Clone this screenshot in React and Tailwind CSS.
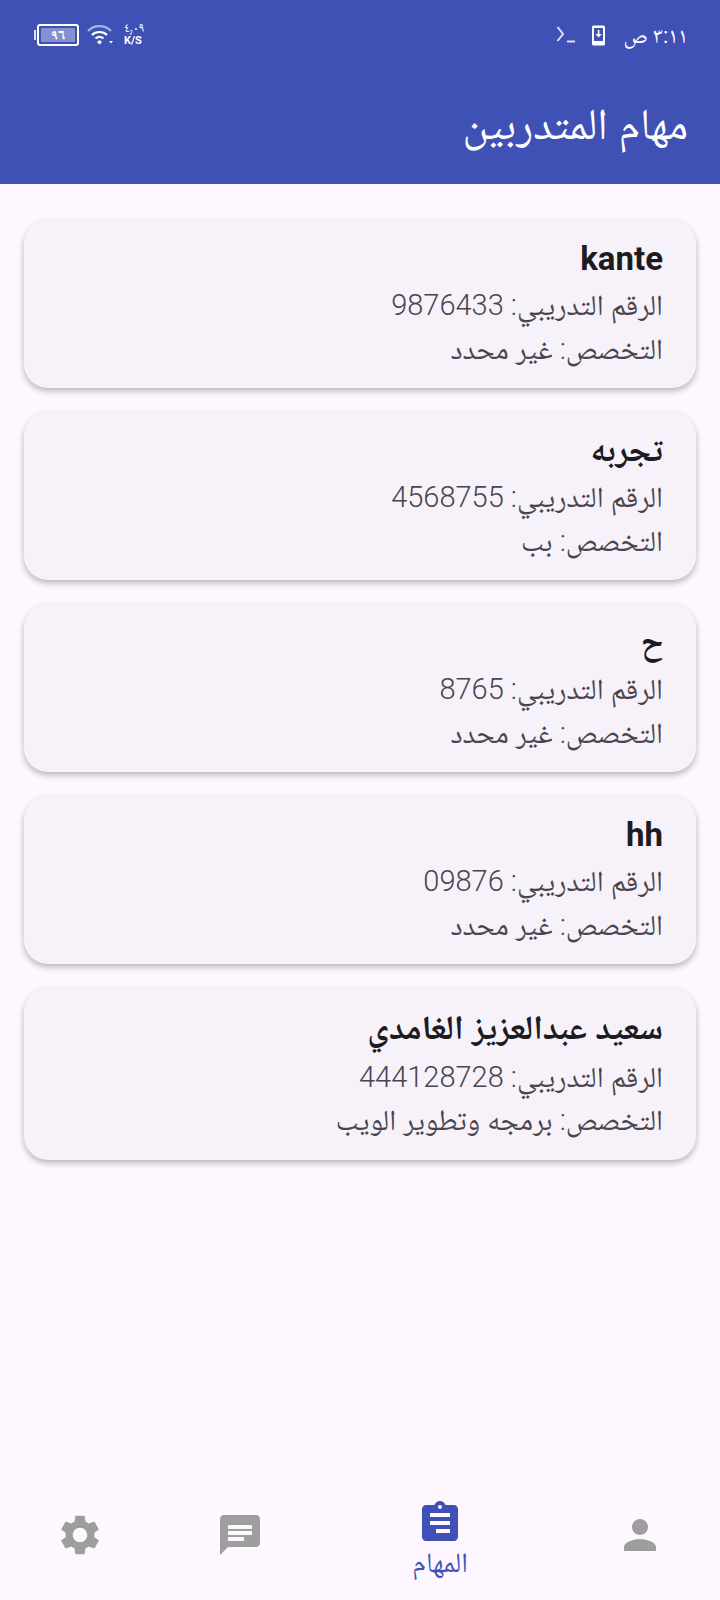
const font = { fontFamily: '"Roboto","Noto Naskh Arabic","Noto Sans Arabic","Droid Arabic Naskh",serif' };

const trainees = [
  { name: "kante", num: "9876433", spec: "غير محدد" },
  { name: "تجربه", num: "4568755", spec: "بب", ar: true },
  { name: "ح", num: "8765", spec: "غير محدد", ar: true },
  { name: "hh", num: "09876", spec: "غير محدد" },
  { name: "سعيد عبدالعزيز الغامدي", num: "444128728", spec: "برمجه وتطوير الويب", ar: true, tall: true },
];

function Card({ t }) {
  const box = t.tall ? "h-[172px] pt-[19px]" : t.ar ? "h-[168px] pt-[17px]" : "h-[168px] pt-[19px]";
  const nameGap = t.tall ? "mb-[10px]" : t.ar ? "mb-[8px]" : "mb-[6px]";
  const numGap = t.tall ? "mb-[3px]" : "mb-[4px]";
  return (
    <div className={`${box} rounded-[24px] bg-[#f7f2fa] pl-8 pr-[33px] shadow-[0_3px_6px_rgba(0,0,0,0.28)] flex flex-col text-right`}>
      <div className={`${t.ar ? "text-[34px] tracking-[0.55px]" : "text-[33px]"} ${nameGap} leading-[40px] font-bold text-[#1c1b1f]`}>{t.name}</div>
      <div className={`${numGap} text-[29px] tracking-[0.4px] leading-[40px] font-light text-[#49454f]`}>الرقم التدريبي: {t.num}</div>
      <div className="text-[29px] leading-[40px] font-light text-[#49454f]">التخصص: {t.spec}</div>
    </div>
  );
}

export default function App() {
  return (
    <div dir="rtl" style={font} className="relative w-[720px] h-[1600px] bg-[#fef7ff] flex flex-col overflow-hidden">
      <header className="h-[184px] bg-[#3f51b5] text-white pr-[32px] pl-[34px] flex flex-col">
        <div className="h-[70px] flex items-center justify-between">
          <div className="flex items-center gap-[16px]">
            <span className="text-[22px] ml-[1px]">٣:١١ ص</span>
            <svg width="14" height="21" viewBox="0 0 14 21"><rect width="13" height="20" y="0.5" rx="1.5" fill="#fff" /><rect x="2" y="3" width="9" height="13" fill="#3f51b5" /><path d="M5.800 5h1.600v4h2.400L6.600 12.600 3.400 9h2.400z" fill="#fff" /></svg>
            <svg width="20" height="18" viewBox="0 0 20 18" fill="none"><path d="M1.500 1 L7 8 L1.500 15" stroke="#dfe2f3" strokeWidth="2" /><path d="M11 15.500h8" stroke="#dfe2f3" strokeWidth="2" /></svg>
          </div>
          <div dir="ltr" className="flex flex-row-reverse items-center gap-[8px] mr-auto">
            <div className="flex flex-col items-start leading-none -mt-[2px] ml-[3px]">
              <span className="text-[13px] leading-[14px] tracking-[1px]">٤٫٠٩</span>
              <span className="text-[11px] leading-[12px] font-bold">K/S</span>
            </div>
            <svg width="26" height="20" viewBox="0 0 26 20" fill="none"><path d="M1 6C7-.5 18-.5 24 6" stroke="#aab3de" strokeWidth="2.200" /><path d="M5 10C9 6 16 6 20 10" stroke="#fff" strokeWidth="2.200" /><path d="M8.500 13.500c2.500-2 5.500-2 8 0" stroke="#fff" strokeWidth="2.200" /><path d="M10 17l2.500-2 2.500 2-2.500 2.500z" fill="#fff" /><path d="M22 16h4l-2 2.500z" fill="#fff" /></svg>
            <div className="flex items-center gap-[1px]">
              <div className="w-[2px] h-[10px] bg-[#dfe2f3]"></div>
              <div className="w-[42px] h-[22px] rounded-[3px] border-2 border-white p-[2px] flex">
                <div className="flex-1 bg-[#8590d0] rounded-[1px] flex items-center justify-center text-[15px] leading-none font-bold">٩٦</div>
              </div>
            </div>
          </div>
        </div>
        <h1 className="text-[44px] leading-[48px] font-light mt-[30px]">مهام المتدربين</h1>
      </header>

      <main className="flex flex-col gap-[24px] px-[24px] pt-[36px]">
        {trainees.map((t) => <Card key={t.num} t={t} />)}
      </main>

      <nav className="absolute bottom-0 left-0 right-0 h-[116px] flex pt-[15px]">
        <div className="w-[160px] ml-[40px] flex justify-center pt-[12px]">
          <svg width="48" height="48" viewBox="0 0 24 24" fill="#9e9e9e"><path d="M12 12c2.210 0 4-1.790 4-4s-1.790-4-4-4-4 1.790-4 4 1.790 4 4 4zm0 2c-2.670 0-8 1.340-8 4v2h16v-2c0-2.660-5.330-4-8-4z" /></svg>
        </div>
        <div className="w-[160px] ml-[40px] flex flex-col items-center">
          <svg width="48" height="48" viewBox="0 0 24 24" fill="#3f51b5"><path d="M19 3h-4.180C14.400 1.840 13.300 1 12 1s-2.400.84-2.820 2H5c-1.100 0-2 .9-2 2v14c0 1.100.9 2 2 2h14c1.100 0 2-.9 2-2V5c0-1.100-.9-2-2-2zm-7 0c.55 0 1 .45 1 1s-.45 1-1 1-1-.45-1-1 .45-1 1-1zM7 7h10v2H7V7zm0 4h10v2H7v-2zm3 4h7v2h-7v-2z" /></svg>
          <span className="text-[28px] leading-[32px] font-light text-[#3f51b5]">المهام</span>
        </div>
        <div className="w-[160px] flex justify-center pt-[12px]">
          <svg width="48" height="48" viewBox="0 0 24 24" fill="#9e9e9e"><path d="M20 2H4c-1.100 0-2 .9-2 2v18l4-4h14c1.100 0 2-.9 2-2V4c0-1.100-.9-2-2-2zM6 7h12v2H6V7zm0 3h12v2H6v-2zm8 5H6v-2h8v2z" /></svg>
        </div>
        <div className="w-[160px] flex justify-center pt-[12px]">
          <svg width="48" height="48" viewBox="0 0 24 24" fill="#9e9e9e"><path d="M19.140 12.940c.04-.3.060-.61.060-.94 0-.32-.020-.64-.070-.94l2.030-1.580a.49.49 0 0 0 .12-.61l-1.920-3.320a.49.49 0 0 0-.59-.22l-2.390.96c-.5-.38-1.030-.7-1.620-.94l-.36-2.540a.48.48 0 0 0-.48-.41h-3.840a.47.47 0 0 0-.47.41l-.36 2.540c-.59.24-1.130.57-1.620.94l-2.390-.96a.48.48 0 0 0-.59.22L2.740 8.870a.48.48 0 0 0 .12.61l2.030 1.580c-.05.3-.09.63-.09.94s.020.64.070.94l-2.030 1.580a.49.49 0 0 0-.12.61l1.920 3.320c.12.22.37.29.59.22l2.390-.96c.5.38 1.030.7 1.620.94l.36 2.540c.05.24.24.41.48.41h3.840c.24 0 .44-.17.47-.41l.36-2.540c.59-.24 1.130-.56 1.620-.94l2.390.96c.22.08.47 0 .59-.22l1.920-3.320a.48.48 0 0 0-.12-.61l-2.010-1.580zM12 15.600c-1.980 0-3.600-1.620-3.600-3.600s1.620-3.600 3.600-3.600 3.600 1.620 3.600 3.600-1.620 3.600-3.600 3.600z" /></svg>
        </div>
      </nav>
    </div>
  );
}
